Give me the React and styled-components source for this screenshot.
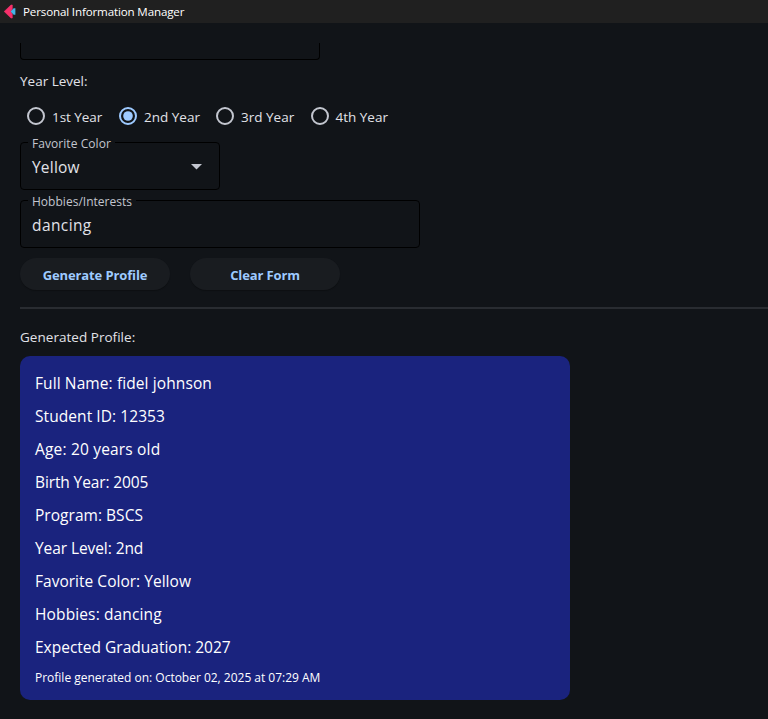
import React from "react";
import styled, { createGlobalStyle } from "styled-components";

const GlobalStyle = createGlobalStyle`
  * { box-sizing: border-box; }
  body { margin: 0; background: #111418; overflow: hidden; }
`;

const Window = styled.div`
  width: 768px;
  height: 719px;
  background: #111418;
  color: #e1e2e8;
  font-family: "Open Sans", "Noto Sans", sans-serif;
  overflow: hidden;
`;

const TitleBar = styled.header`
  display: flex;
  align-items: center;
  height: 23px;
  padding-left: 3px;
  gap: 6px;
  background: #202020;
  color: #ffffff;
`;

const Text = styled.span`
  display: block;
  white-space: pre;
  font-size: ${(p) => p.$size}px;
  line-height: ${(p) => p.$line || 20}px;
  font-weight: ${(p) => p.$weight || 400};
  letter-spacing: ${(p) => p.$track || 0}px;
`;

const Content = styled.main`
  display: flex;
  flex-direction: column;
  align-items: flex-start;
  padding: 20px 0 0 20px;
`;

const ClippedField = styled.div`
  width: 300px;
  height: 17px;
  border: 1px solid #000;
  border-top: 0;
  border-radius: 0 0 4px 4px;
`;

const GroupLabel = styled.div`
  margin-top: ${(p) => p.$top}px;
  height: 20px;
`;

const RadioRow = styled.div`
  display: flex;
  height: 20px;
  margin-top: 16px;
  padding-left: 7px;
`;

const RadioOption = styled.label`
  display: flex;
  gap: 7px;
  width: ${(p) => p.$width}px;
`;

const RadioIcon = styled.svg`
  display: block;
  flex: none;
`;

const Field = styled.fieldset`
  display: flex;
  justify-content: space-between;
  width: ${(p) => p.$width}px;
  height: 56px;
  min-width: 0;
  margin: ${(p) => p.$top}px 0 0;
  padding: 5px 17px 0 11px;
  border: 1px solid #000;
  border-radius: 4px;
`;

const FieldLabel = styled.legend`
  height: 16px;
  padding: 0 4px;
  margin-left: -4px;
  color: #c3c6cf;
`;

const Arrow = styled.svg`
  display: block;
  margin-top: 9px;
`;

const Actions = styled.div`
  display: flex;
  gap: 20px;
  margin-top: 10px;
`;

const Button = styled.button`
  display: flex;
  align-items: center;
  justify-content: center;
  width: 150px;
  height: 32px;
  padding: 2px 0 0;
  border: 0;
  border-radius: 16px;
  background: #191c20;
  box-shadow: 0 1px 1px rgba(0, 0, 0, 0.25);
  color: #9ecaff;
  font-family: inherit;
`;

const Divider = styled.div`
  width: 100%;
  height: 2px;
  margin-top: 17px;
  background: #292c31;
`;

const ProfileCard = styled.section`
  width: 550px;
  height: 344px;
  margin-top: 9px;
  padding: 11px 15px 0;
  border-radius: 10px;
  background: #1a237e;
  color: #ffffff;
`;

const ProfileFooter = styled.footer`
  margin-top: 4px;
`;

const years = [
  { text: "1st Year", width: 92, track: -0.05 },
  { text: "2nd Year", width: 97, selected: true },
  { text: "3rd Year", width: 94.5 },
  { text: "4th Year", width: 90 },
];

const profile = [
  { text: "Full Name: fidel johnson", track: 0.1 },
  { text: "Student ID: 12353", track: 0.07 },
  { text: "Age: 20 years old", track: 0.18 },
  { text: "Birth Year: 2005", track: -0.12 },
  { text: "Program: BSCS", track: 0.03 },
  { text: "Year Level: 2nd", track: -0.08 },
  { text: "Favorite Color: Yellow", track: 0.02 },
  { text: "Hobbies: dancing", track: 0.13 },
  { text: "Expected Graduation: 2027", track: 0 },
];

function Radio({ selected }) {
  const color = selected ? "#9ecaff" : "#c3c6cf";
  return (
    <RadioIcon width="18" height="18" viewBox="0 0 18 18">
      <circle cx="9" cy="9" r="8" fill="none" stroke={color} strokeWidth="2" />
      {selected && <circle cx="9" cy="9" r="4.8" fill={color} />}
    </RadioIcon>
  );
}

export default function App() {
  return (
    <Window>
      <GlobalStyle />
      <TitleBar>
        <svg width="14" height="16" viewBox="0 0 14 16">
          <path d="M1.2 7.5 8 1H9.3V5L7.8 7.5 9.3 10V14H8Z" fill="#f6306b" stroke="#f6306b" strokeWidth="0.6" strokeLinejoin="round" />
          <path d="M7.6 7.5 10.6 4.2H12.4V10.8H10.6Z" fill="#45b5e8" />
        </svg>
        <Text $size={11.6} $track={-0.15}>Personal Information Manager</Text>
      </TitleBar>
      <Content>
        <ClippedField />
        <GroupLabel $top={11}><Text $size={13.5}>Year Level:</Text></GroupLabel>
        <RadioRow>
          {years.map((y) => (
            <RadioOption key={y.text} $width={y.width}>
              <Radio selected={y.selected} />
              <Text $size={13.5} $track={y.track}>{y.text}</Text>
            </RadioOption>
          ))}
        </RadioRow>
        <Field $width={200} $top={7}>
          <FieldLabel><Text $size={12} $line={19} $track={0.06}>Favorite Color</Text></FieldLabel>
          <Text $size={15.5} $line={24} $track={0.2}>Yellow</Text>
          <Arrow width="11" height="6" viewBox="0 0 11 6"><path d="M0 0H11L5.5 5.5Z" fill="#c3c6cf" /></Arrow>
        </Field>
        <Field $width={400} $top={2}>
          <FieldLabel><Text $size={12} $line={19} $track={0.02}>Hobbies/Interests</Text></FieldLabel>
          <Text $size={15.5} $line={24} $track={0.4}>dancing</Text>
        </Field>
        <Actions>
          <Button><Text $size={13} $weight={700} $track={-0.12}>Generate Profile</Text></Button>
          <Button><Text $size={13} $weight={700} $track={-0.12}>Clear Form</Text></Button>
        </Actions>
        <Divider />
        <GroupLabel $top={18}><Text $size={13.5} $track={0.03}>Generated Profile:</Text></GroupLabel>
        <ProfileCard>
          {profile.map((line) => (
            <Text key={line.text} $size={15.5} $line={33} $track={line.track}>{line.text}</Text>
          ))}
          <ProfileFooter>
            <Text $size={12} $weight={500} $track={-0.01}>Profile generated on: October 02, 2025 at 07:29 AM</Text>
          </ProfileFooter>
        </ProfileCard>
      </Content>
    </Window>
  );
}
